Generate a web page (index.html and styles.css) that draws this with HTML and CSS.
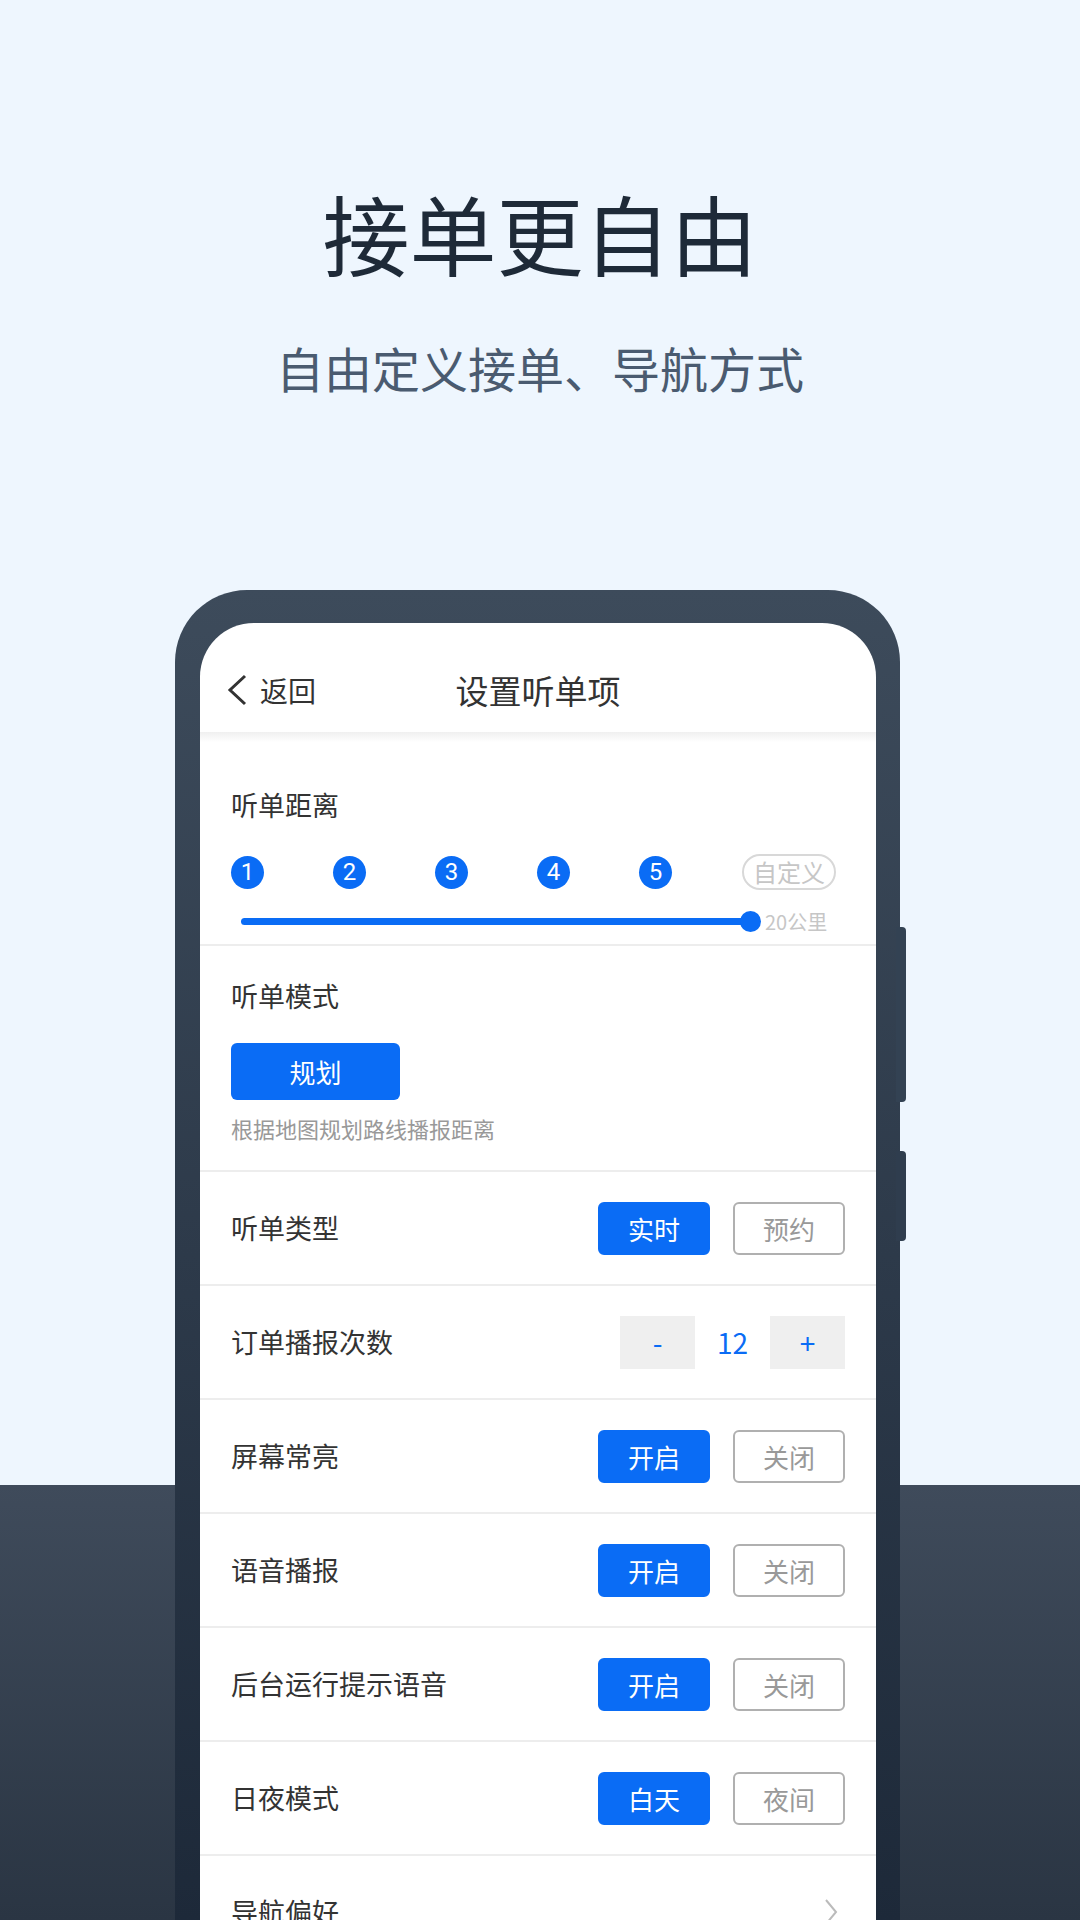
FILE: index.html
```html
<!DOCTYPE html>
<html lang="zh-CN">
<head>
  <meta charset="UTF-8">
  <title>接单更自由</title>
  <link rel="stylesheet" href="styles.css">
</head>
<body>
  <div class="hero">
    <h1 class="headline">接单更自由</h1>
    <p class="subline">自由定义接单、导航方式</p>
  </div>

  <div class="phone">
    <div class="screen">
      <header class="navbar">
        <a class="back">
          <svg width="22" height="32" viewBox="0 0 22 32"><polyline points="19,2 4,16 19,30" fill="none" stroke="#333" stroke-width="3"/></svg>
          <span>返回</span>
        </a>
        <h2 class="nav-title">设置听单项</h2>
        <span></span>
      </header>
      <div class="nav-shadow"></div>

      <section class="block distance">
        <div class="label">听单距离</div>
        <div class="steps">
          <span class="dot">1</span>
          <span class="dot">2</span>
          <span class="dot">3</span>
          <span class="dot">4</span>
          <span class="dot">5</span>
          <span class="pill">自定义</span>
        </div>
        <div class="slider">
          <div class="track"><span class="thumb"></span></div>
          <span class="slider-value">20公里</span>
        </div>
      </section>

      <section class="block mode">
        <div class="label">听单模式</div>
        <button class="mode-btn">规划</button>
        <div class="hint">根据地图规划路线播报距离</div>
      </section>

      <div class="row">
        <span class="label">听单类型</span>
        <div class="opts"><span class="opt on">实时</span><span class="opt">预约</span></div>
      </div>

      <div class="row">
        <span class="label">订单播报次数</span>
        <div class="stepper"><span class="step-btn">-</span><span class="step-num">12</span><span class="step-btn">+</span></div>
      </div>

      <div class="row">
        <span class="label">屏幕常亮</span>
        <div class="opts"><span class="opt on">开启</span><span class="opt">关闭</span></div>
      </div>

      <div class="row">
        <span class="label">语音播报</span>
        <div class="opts"><span class="opt on">开启</span><span class="opt">关闭</span></div>
      </div>

      <div class="row">
        <span class="label">后台运行提示语音</span>
        <div class="opts"><span class="opt on">开启</span><span class="opt">关闭</span></div>
      </div>

      <div class="row">
        <span class="label">日夜模式</span>
        <div class="opts"><span class="opt on">白天</span><span class="opt">夜间</span></div>
      </div>

      <div class="row">
        <span class="label">导航偏好</span>
        <svg class="arrow" width="14" height="28" viewBox="0 0 14 28"><polyline points="2,2 12,14 2,26" fill="none" stroke="#bbb" stroke-width="2"/></svg>
      </div>
    </div>
  </div>
</body>
</html>
```

FILE: styles.css
```css
body {
  margin: 0;
  width: 1080px;
  height: 1920px;
  overflow: hidden;
  font-family: "Noto Sans CJK SC", sans-serif;
  background: linear-gradient(to bottom, #eef6fe 0, #eef6fe 1485px, #3f4b5b 1485px, #2a3543 1920px);
}

.hero {
  padding-top: 182px;
  text-align: center;
}

.headline {
  margin: 0;
  font-size: 87px;
  line-height: 100px;
  font-weight: 400;
  color: #1e2a38;
}

.subline {
  margin: 55px 0 0;
  font-size: 48px;
  line-height: 60px;
  color: #4a5b70;
}

.phone {
  position: relative;
  width: 676px;
  height: 1297px;
  margin: 193px 0 0 175px;
  padding: 33px 24px 0 25px;
  border-radius: 72px 72px 0 0;
  background: linear-gradient(to bottom, #3d4b5b, #1d2939);
}

.phone::before,
.phone::after {
  content: "";
  position: absolute;
  right: -6px;
  width: 10px;
  border-radius: 0 4px 4px 0;
  background: #334253;
}

.phone::before {
  top: 337px;
  height: 175px;
}

.phone::after {
  top: 561px;
  height: 90px;
  background: #2f3d4e;
}

.screen {
  height: 100%;
  background: #ffffff;
  border-radius: 54px 54px 0 0;
  overflow: hidden;
  color: #333;
}

.navbar {
  display: grid;
  grid-template-columns: 1fr auto 1fr;
  align-items: center;
  height: 85px;
  padding-top: 24px;
}

.back {
  display: flex;
  align-items: center;
  padding-left: 26px;
  font-size: 28px;
  color: #333;
}

.back span {
  margin-left: 12px;
}

.nav-title {
  margin: 0;
  font-size: 33px;
  font-weight: 400;
  color: #333;
}

.nav-shadow {
  height: 10px;
  background: linear-gradient(to bottom, #f0f0f0, #ffffff);
}

.block {
  padding: 0 31px;
  border-bottom: 2px solid #ededed;
}

.label {
  font-size: 27px;
  line-height: 36px;
  color: #333;
}

.distance {
  padding-top: 45px;
  padding-bottom: 12px;
}

.steps {
  display: flex;
  align-items: center;
  gap: 69px;
  margin-top: 31px;
  height: 36px;
}

.dot {
  width: 33px;
  height: 33px;
  border-radius: 50%;
  background: #0a6cf5;
  color: #fff;
  font-family: Roboto, sans-serif;
  font-size: 24px;
  line-height: 33px;
  text-align: center;
}

.pill {
  box-sizing: border-box;
  width: 94px;
  height: 36px;
  border: 2px solid #d8d8d8;
  border-radius: 18px;
  margin-left: 1px;
  font-size: 24px;
  line-height: 32px;
  text-align: center;
  color: #c6c6c6;
}

.slider {
  display: flex;
  align-items: center;
  height: 22px;
  margin: 20px 0 0 10px;
}

.track {
  position: relative;
  width: 510px;
  height: 7px;
  border-radius: 4px;
  background: #0a6cf5;
}

.thumb {
  position: absolute;
  right: -10px;
  top: -7px;
  width: 21px;
  height: 21px;
  border-radius: 50%;
  background: #0a6cf5;
}

.slider-value {
  margin-left: 14px;
  font-size: 20px;
  color: #c6c6c6;
}

.mode {
  padding-top: 32px;
  padding-bottom: 27px;
}

.mode-btn {
  display: block;
  width: 169px;
  height: 57px;
  margin-top: 29px;
  border: none;
  border-radius: 6px;
  background: #0a6cf5;
  color: #fff;
  font-family: "Noto Sans CJK SC", sans-serif;
  font-size: 26px;
}

.hint {
  margin-top: 13px;
  font-size: 22px;
  line-height: 30px;
  color: #999;
}

.row {
  display: flex;
  align-items: center;
  justify-content: space-between;
  height: 112px;
  padding: 0 31px;
  border-bottom: 2px solid #ededed;
}

.opts {
  display: flex;
  gap: 23px;
}

.opt {
  box-sizing: border-box;
  width: 112px;
  height: 53px;
  border: 2px solid #b0b0b0;
  border-radius: 6px;
  font-size: 26px;
  line-height: 49px;
  text-align: center;
  color: #999;
}

.opt.on {
  border-color: #0a6cf5;
  background: #0a6cf5;
  color: #fff;
}

.stepper {
  display: flex;
  align-items: center;
}

.step-btn {
  width: 75px;
  height: 53px;
  background: #efefef;
  color: #0a6cf5;
  font-size: 28px;
  line-height: 53px;
  text-align: center;
}

.step-num {
  width: 75px;
  font-size: 28px;
  text-align: center;
  color: #0a6cf5;
}

.arrow {
  margin-right: 7px;
}
```
